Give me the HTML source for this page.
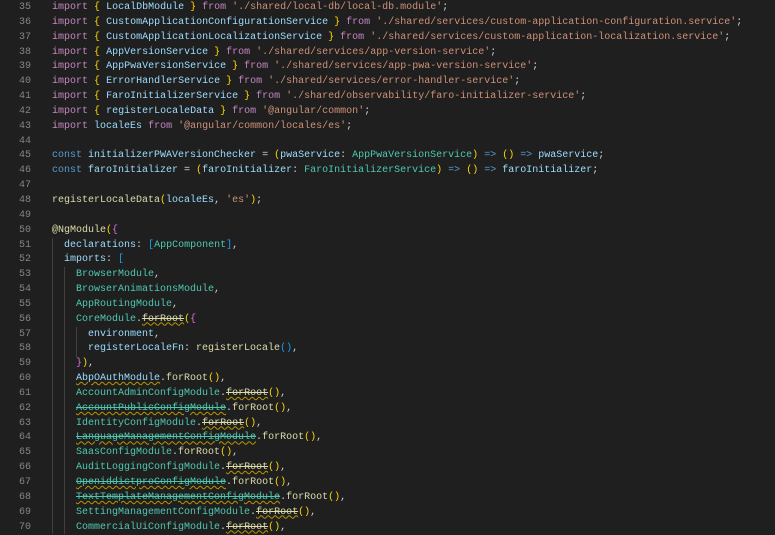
<!DOCTYPE html><html><head><style>
body{margin:0;padding-top:1px;background:#1f1f1f;width:775px;height:534px;overflow:hidden;font-family:"Liberation Mono",monospace;font-size:10px;}
.l{position:relative;height:14.85px;line-height:14.85px;white-space:pre;color:#d4d4d4}
.n{position:absolute;left:0;width:31px;text-align:right;color:#858585}
.c{position:absolute;left:52px}
.k{color:#c586c0}.b{color:#ffd700}.v{color:#9cdcfe}.s{color:#ce9178}.kw{color:#569cd6}.f{color:#dcdcaa}.t{color:#4ec9b0}.p{color:#da70d6}.bl{color:#179fff}
.w{text-decoration:underline wavy #b89500;text-decoration-thickness:1px;text-underline-offset:1px}
.x{text-decoration:line-through}
.g{position:absolute;top:0;width:1px;background:#404040}
</style></head><body>
<div class="g" style="left:52px;top:238px;height:296px"></div>
<div class="g" style="left:64px;top:267px;height:267px"></div>
<div class="g" style="left:76px;top:327px;height:30px"></div>
<div class="l"><span class="n">35</span><span class="c"><span class="k">import</span> <span class="b">{</span> <span class="v">LocalDbModule</span> <span class="b">}</span> <span class="k">from</span> <span class="s">'./shared/local-db/local-db.module'</span>;</span></div>
<div class="l"><span class="n">36</span><span class="c"><span class="k">import</span> <span class="b">{</span> <span class="v">CustomApplicationConfigurationService</span> <span class="b">}</span> <span class="k">from</span> <span class="s">'./shared/services/custom-application-configuration.service'</span>;</span></div>
<div class="l"><span class="n">37</span><span class="c"><span class="k">import</span> <span class="b">{</span> <span class="v">CustomApplicationLocalizationService</span> <span class="b">}</span> <span class="k">from</span> <span class="s">'./shared/services/custom-application-localization.service'</span>;</span></div>
<div class="l"><span class="n">38</span><span class="c"><span class="k">import</span> <span class="b">{</span> <span class="v">AppVersionService</span> <span class="b">}</span> <span class="k">from</span> <span class="s">'./shared/services/app-version-service'</span>;</span></div>
<div class="l"><span class="n">39</span><span class="c"><span class="k">import</span> <span class="b">{</span> <span class="v">AppPwaVersionService</span> <span class="b">}</span> <span class="k">from</span> <span class="s">'./shared/services/app-pwa-version-service'</span>;</span></div>
<div class="l"><span class="n">40</span><span class="c"><span class="k">import</span> <span class="b">{</span> <span class="v">ErrorHandlerService</span> <span class="b">}</span> <span class="k">from</span> <span class="s">'./shared/services/error-handler-service'</span>;</span></div>
<div class="l"><span class="n">41</span><span class="c"><span class="k">import</span> <span class="b">{</span> <span class="v">FaroInitializerService</span> <span class="b">}</span> <span class="k">from</span> <span class="s">'./shared/observability/faro-initializer-service'</span>;</span></div>
<div class="l"><span class="n">42</span><span class="c"><span class="k">import</span> <span class="b">{</span> <span class="v">registerLocaleData</span> <span class="b">}</span> <span class="k">from</span> <span class="s">'@angular/common'</span>;</span></div>
<div class="l"><span class="n">43</span><span class="c"><span class="k">import</span> <span class="v">localeEs</span> <span class="k">from</span> <span class="s">'@angular/common/locales/es'</span>;</span></div>
<div class="l"><span class="n">44</span></div>
<div class="l"><span class="n">45</span><span class="c"><span class="kw">const</span> <span class="v">initializerPWAVersionChecker</span> = <span class="b">(</span><span class="v">pwaService</span>: <span class="t">AppPwaVersionService</span><span class="b">)</span> <span class="kw">=&gt;</span> <span class="b">()</span> <span class="kw">=&gt;</span> <span class="v">pwaService</span>;</span></div>
<div class="l"><span class="n">46</span><span class="c"><span class="kw">const</span> <span class="v">faroInitializer</span> = <span class="b">(</span><span class="v">faroInitializer</span>: <span class="t">FaroInitializerService</span><span class="b">)</span> <span class="kw">=&gt;</span> <span class="b">()</span> <span class="kw">=&gt;</span> <span class="v">faroInitializer</span>;</span></div>
<div class="l"><span class="n">47</span></div>
<div class="l"><span class="n">48</span><span class="c"><span class="f">registerLocaleData</span><span class="b">(</span><span class="v">localeEs</span>, <span class="s">'es'</span><span class="b">)</span>;</span></div>
<div class="l"><span class="n">49</span></div>
<div class="l"><span class="n">50</span><span class="c"><span class="f">@NgModule</span><span class="b">(</span><span class="p">{</span></span></div>
<div class="l"><span class="n">51</span><span class="c">  <span class="v">declarations</span>: <span class="bl">[</span><span class="t">AppComponent</span><span class="bl">]</span>,</span></div>
<div class="l"><span class="n">52</span><span class="c">  <span class="v">imports</span>: <span class="bl">[</span></span></div>
<div class="l"><span class="n">53</span><span class="c">    <span class="t">BrowserModule</span>,</span></div>
<div class="l"><span class="n">54</span><span class="c">    <span class="t">BrowserAnimationsModule</span>,</span></div>
<div class="l"><span class="n">55</span><span class="c">    <span class="t">AppRoutingModule</span>,</span></div>
<div class="l"><span class="n">56</span><span class="c">    <span class="t">CoreModule</span>.<span class="f w"><span class="x">forRoot</span></span><span class="b">(</span><span class="p">{</span></span></div>
<div class="l"><span class="n">57</span><span class="c">      <span class="v">environment</span>,</span></div>
<div class="l"><span class="n">58</span><span class="c">      <span class="v">registerLocaleFn</span>: <span class="f">registerLocale</span><span class="bl">()</span>,</span></div>
<div class="l"><span class="n">59</span><span class="c">    <span class="p">}</span><span class="b">)</span>,</span></div>
<div class="l"><span class="n">60</span><span class="c">    <span class="v w">AbpOAuthModule</span>.<span class="f">forRoot</span><span class="b">()</span>,</span></div>
<div class="l"><span class="n">61</span><span class="c">    <span class="t">AccountAdminConfigModule</span>.<span class="f w"><span class="x">forRoot</span></span><span class="b">()</span>,</span></div>
<div class="l"><span class="n">62</span><span class="c">    <span class="t w"><span class="x">AccountPublicConfigModule</span></span>.<span class="f">forRoot</span><span class="b">()</span>,</span></div>
<div class="l"><span class="n">63</span><span class="c">    <span class="t">IdentityConfigModule</span>.<span class="f w"><span class="x">forRoot</span></span><span class="b">()</span>,</span></div>
<div class="l"><span class="n">64</span><span class="c">    <span class="t w"><span class="x">LanguageManagementConfigModule</span></span>.<span class="f">forRoot</span><span class="b">()</span>,</span></div>
<div class="l"><span class="n">65</span><span class="c">    <span class="t">SaasConfigModule</span>.<span class="f">forRoot</span><span class="b">()</span>,</span></div>
<div class="l"><span class="n">66</span><span class="c">    <span class="t">AuditLoggingConfigModule</span>.<span class="f w"><span class="x">forRoot</span></span><span class="b">()</span>,</span></div>
<div class="l"><span class="n">67</span><span class="c">    <span class="t w"><span class="x">OpeniddictproConfigModule</span></span>.<span class="f">forRoot</span><span class="b">()</span>,</span></div>
<div class="l"><span class="n">68</span><span class="c">    <span class="t w"><span class="x">TextTemplateManagementConfigModule</span></span>.<span class="f">forRoot</span><span class="b">()</span>,</span></div>
<div class="l"><span class="n">69</span><span class="c">    <span class="t">SettingManagementConfigModule</span>.<span class="f w"><span class="x">forRoot</span></span><span class="b">()</span>,</span></div>
<div class="l"><span class="n">70</span><span class="c">    <span class="t">CommercialUiConfigModule</span>.<span class="f w"><span class="x">forRoot</span></span><span class="b">()</span>,</span></div>
</body></html>
